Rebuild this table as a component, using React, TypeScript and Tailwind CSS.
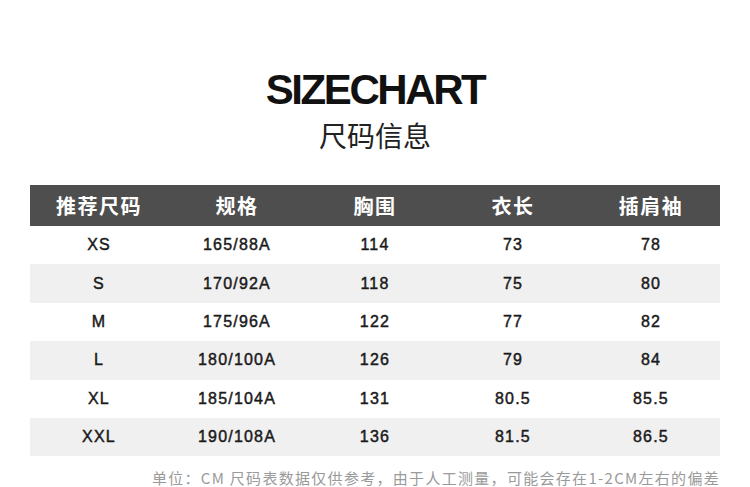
const rows: string[][] = [
  ["XS", "165/88A", "114", "73", "78"],
  ["S", "170/92A", "118", "75", "80"],
  ["M", "175/96A", "122", "77", "82"],
  ["L", "180/100A", "126", "79", "84"],
  ["XL", "185/104A", "131", "80.5", "85.5"],
  ["XXL", "190/108A", "136", "81.5", "86.5"],
];

const headers = ["推荐尺码", "规格", "胸围", "衣长", "插肩袖"];

const cjk = "font-['Noto_Sans_CJK_SC',sans-serif]";

export default function App() {
  return (
    <div className="w-[750px] h-[487px] bg-white overflow-hidden font-['Liberation_Sans','Noto_Sans_CJK_SC',sans-serif]">
      <div className="pt-[68px] flex flex-col items-center">
        <h1 className="text-[42px] leading-[44px] font-bold tracking-[-2.4px] text-[#111]">SIZECHART</h1>
        <h2 className={`${cjk} mt-[5px] text-[28px] leading-[36px] text-[#222]`}>尺码信息</h2>
      </div>

      <div className="mx-[30px] mt-[32px]">
        <div className="grid grid-cols-5 h-[41px] bg-[#4e4e4e] items-center">
          {headers.map((h) => (
            <div key={h} className={`${cjk} text-center text-white text-[20px] font-bold tracking-[1.5px]`}>
              {h}
            </div>
          ))}
        </div>
        {rows.map((r, i) => (
          <div
            key={r[0]}
            className={`grid grid-cols-5 h-[38.4px] items-center ${i % 2 === 1 ? "bg-[#f0f0f0]" : "bg-white"}`}
          >
            {r.map((c, j) => (
              <div
                key={j}
                className="text-center text-[16px] tracking-[1.2px] text-[#1a1a1a] [-webkit-text-stroke:0.45px_#1a1a1a]"
              >
                {c}
              </div>
            ))}
          </div>
        ))}
      </div>

      <div className={`${cjk} mt-[12px] pr-[30px] text-right text-[15px] leading-[20px] text-[#9a9a9a] tracking-[1.3px]`}>
        单位：CM 尺码表数据仅供参考，由于人工测量，可能会存在1-2CM左右的偏差
      </div>
    </div>
  );
}
